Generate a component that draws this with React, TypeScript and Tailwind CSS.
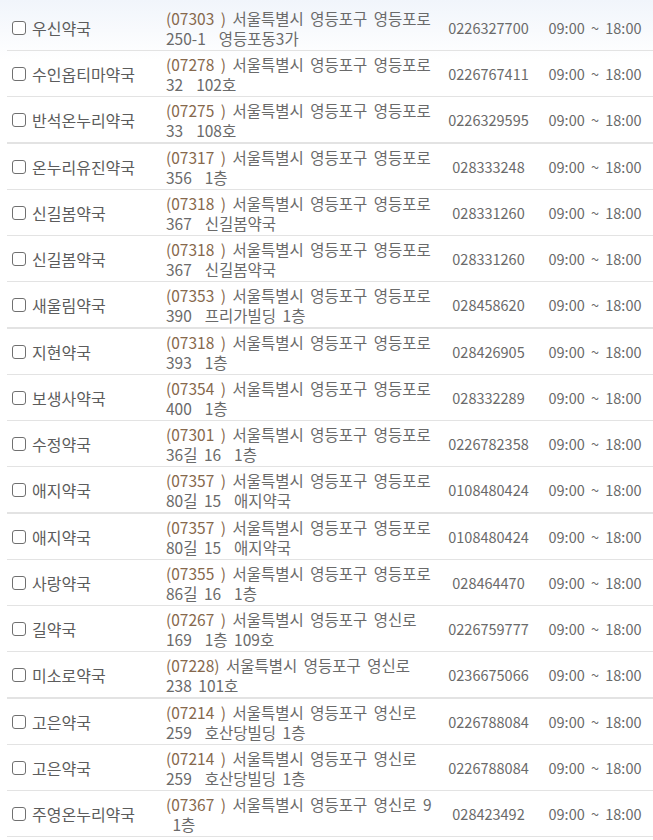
import React from 'react';

type Pharmacy = {
  name: string;
  zip: string;
  line1: string;
  line2: string;
  phone: string;
  thick?: boolean;
};

const pharmacies: Pharmacy[] = [
  { name: "우신약국", zip: "(07303 )", line1: "서울특별시 영등포구 영등포로", line2: "250-1\u00a0\u00a0영등포동3가", phone: "0226327700" },
  { name: "수인옵티마약국", zip: "(07278 )", line1: "서울특별시 영등포구 영등포로", line2: "32\u00a0\u00a0102호", phone: "0226767411" },
  { name: "반석온누리약국", zip: "(07275 )", line1: "서울특별시 영등포구 영등포로", line2: "33\u00a0\u00a0108호", phone: "0226329595", thick: true },
  { name: "온누리유진약국", zip: "(07317 )", line1: "서울특별시 영등포구 영등포로", line2: "356\u00a0\u00a01층", phone: "028333248" },
  { name: "신길봄약국", zip: "(07318 )", line1: "서울특별시 영등포구 영등포로", line2: "367\u00a0\u00a0신길봄약국", phone: "028331260" },
  { name: "신길봄약국", zip: "(07318 )", line1: "서울특별시 영등포구 영등포로", line2: "367\u00a0\u00a0신길봄약국", phone: "028331260" },
  { name: "새울림약국", zip: "(07353 )", line1: "서울특별시 영등포구 영등포로", line2: "390\u00a0\u00a0프리가빌딩 1층", phone: "028458620", thick: true },
  { name: "지현약국", zip: "(07318 )", line1: "서울특별시 영등포구 영등포로", line2: "393\u00a0\u00a01층", phone: "028426905" },
  { name: "보생사약국", zip: "(07354 )", line1: "서울특별시 영등포구 영등포로", line2: "400\u00a0\u00a01층", phone: "028332289" },
  { name: "수정약국", zip: "(07301 )", line1: "서울특별시 영등포구 영등포로", line2: "36길 16\u00a0\u00a01층", phone: "0226782358" },
  { name: "애지약국", zip: "(07357 )", line1: "서울특별시 영등포구 영등포로", line2: "80길 15\u00a0\u00a0애지약국", phone: "0108480424", thick: true },
  { name: "애지약국", zip: "(07357 )", line1: "서울특별시 영등포구 영등포로", line2: "80길 15\u00a0\u00a0애지약국", phone: "0108480424" },
  { name: "사랑약국", zip: "(07355 )", line1: "서울특별시 영등포구 영등포로", line2: "86길 16\u00a0\u00a01층", phone: "028464470" },
  { name: "길약국", zip: "(07267 )", line1: "서울특별시 영등포구 영신로", line2: "169\u00a0\u00a01층 109호", phone: "0226759777" },
  { name: "미소로약국", zip: "(07228)", line1: "서울특별시 영등포구 영신로", line2: "238 101호", phone: "0236675066", thick: true },
  { name: "고은약국", zip: "(07214 )", line1: "서울특별시 영등포구 영신로", line2: "259\u00a0\u00a0호산당빌딩 1층", phone: "0226788084" },
  { name: "고은약국", zip: "(07214 )", line1: "서울특별시 영등포구 영신로", line2: "259\u00a0\u00a0호산당빌딩 1층", phone: "0226788084" },
  { name: "주영온누리약국", zip: "(07367 )", line1: "서울특별시 영등포구 영신로 9", line2: "\u00a01층", phone: "028423492" },
];

const App = () => {
  return (
    <div
      className="w-[653px] h-[840px] overflow-hidden bg-gradient-to-b from-[#f1f5fb] to-white to-[60px] pt-[5px] pl-[7px] text-[15.5px] leading-[20px] text-[#6a6a6a]"
      style={{ fontFamily: '"Noto Sans CJK KR", "Noto Sans", sans-serif' }}
    >
      <div className="flex flex-col">
        {pharmacies.map((p, i) => (
          <PharmacyRow key={i} pharmacy={p} />
        ))}
      </div>
    </div>
  );
};

export default App;

const PharmacyRow = ({ pharmacy }: { pharmacy: Pharmacy }) => {
  return (
    <div
      className={`flex items-center border-[#e3e3e3] ${pharmacy.thick ? "border-b-2 h-[47px]" : "border-b h-[46px]"}`}
    >
      <div className="w-[153px] flex items-center gap-[6px] pl-[5px] text-[#5c5c5c] text-[16px]">
        <span className="w-[14px] h-[14px] rounded-[3px] border border-[#707070] bg-white shrink-0" />
        <span>{pharmacy.name}</span>
      </div>
      <div className="w-[280px] pl-[6px] [word-spacing:3px]">
        <p>
          <span className="text-[#86684c]">{pharmacy.zip}</span> {pharmacy.line1}
        </p>
        <p>{pharmacy.line2}</p>
      </div>
      <div className="w-[97px] text-center text-[14.5px]">{pharmacy.phone}</div>
      <div className="flex-1 text-center text-[14.5px] [word-spacing:3px]">09:00 ~ 18:00</div>
    </div>
  );
};
